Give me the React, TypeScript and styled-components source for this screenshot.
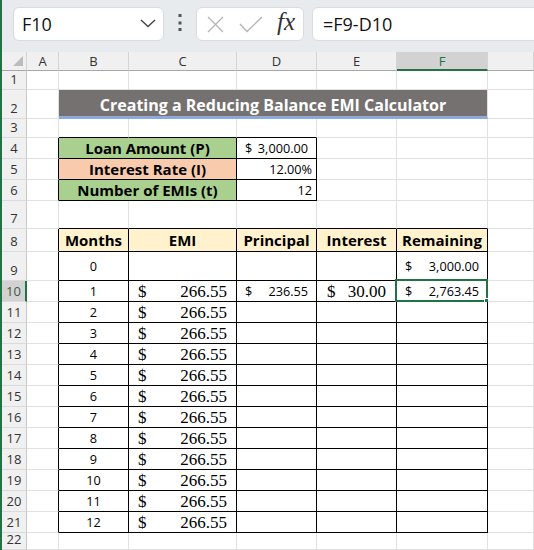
import React from "react";
import styled, { createGlobalStyle } from "styled-components";

const GREEN = "#a9d08e";
const SALMON = "#f8cbad";
const CREAM = "#fff2cc";
const GRID = "#e1e1e1";
const INK = "#000";
const EXCEL_GREEN = "#217346";

type Cell = {
    span?: number;
    text?: string;
    amount?: string;
    kind?: "label" | "head" | "num" | "big" | "title";
    bg?: string;
    align?: "flex-start" | "center" | "flex-end";
    pad?: number;
    selected?: boolean;
};

// rows 1..22, columns A=0 .. G=6
const ROW_HEIGHTS = [19, 29, 19, 21, 21, 21, 28, 23, 29, 21, 21, 21, 21, 21, 21, 21, 21, 21, 21, 21, 21, 17];

const TABLES = [
    { r1: 4, r2: 6, c1: 1, c2: 3 },
    { r1: 8, r2: 21, c1: 1, c2: 5 },
];

const inTable = (r: number, c: number) =>
    TABLES.some((t) => r >= t.r1 && r <= t.r2 && c >= t.c1 && c <= t.c2);

const sheet: Record<number, Record<number, Cell>> = {
    2: { 1: { span: 5, text: "Creating a Reducing Balance EMI Calculator", kind: "title", bg: "#767171" } },
    4: {
        1: { span: 2, text: "Loan Amount (P)", kind: "label", bg: GREEN },
        3: { amount: "3,000.00", kind: "num", pad: 8 },
    },
    5: {
        1: { span: 2, text: "Interest Rate (I)", kind: "label", bg: SALMON },
        3: { text: "12.00%", kind: "num", align: "flex-end", pad: 4 },
    },
    6: {
        1: { span: 2, text: "Number of EMIs (t)", kind: "label", bg: GREEN },
        3: { text: "12", kind: "num", align: "flex-end", pad: 4 },
    },
    8: {
        1: { text: "Months", kind: "head", bg: CREAM },
        2: { text: "EMI", kind: "head", bg: CREAM },
        3: { text: "Principal", kind: "head", bg: CREAM },
        4: { text: "Interest", kind: "head", bg: CREAM },
        5: { text: "Remaining", kind: "head", bg: CREAM },
    },
    9: {
        1: { text: "0", kind: "num" },
        5: { amount: "3,000.00", kind: "num", pad: 8 },
    },
    10: {
        1: { text: "1", kind: "num" },
        2: { amount: "266.55", kind: "big", pad: 9 },
        3: { amount: "236.55", kind: "num", pad: 8 },
        4: { amount: "30.00", kind: "big", pad: 10 },
        5: { amount: "2,763.45", kind: "num", pad: 8, selected: true },
    },
};

for (let m = 2; m <= 12; m++) {
    sheet[m + 9] = {
        1: { text: String(m), kind: "num" },
        2: { amount: "266.55", kind: "big", pad: 9 },
    };
}

const CellText = ({ cell }: { cell: Cell }) => {
    const Text =
        cell.kind === "title" ? TitleText :
        cell.kind === "label" || cell.kind === "head" ? BoldText :
        cell.kind === "big" ? BigText : PlainText;

    if (cell.amount) {
        return (
            <Acct>
                <Text>$</Text>
                <Text>{cell.amount}</Text>
            </Acct>
        );
    }
    return <Text>{cell.text}</Text>;
};

const App = () => {
    const rows = ROW_HEIGHTS.map((_, i) => i + 1);

    return (
        <Page>
            <GlobalStyle />
            <FormulaBar>
                <NameBox>
                    <span>F10</span>
                    <svg width="16" height="9" viewBox="0 0 16 9">
                        <polyline points="1,1 8,7.5 15,1" fill="none" stroke="#444" strokeWidth="1.4" />
                    </svg>
                </NameBox>
                <Dots>
                    <svg width="4" height="18" viewBox="0 0 4 18">
                        <rect x="0.5" y="0" width="3" height="3" fill="#555" />
                        <rect x="0.5" y="7.5" width="3" height="3" fill="#555" />
                        <rect x="0.5" y="14" width="3" height="3" fill="#555" />
                    </svg>
                </Dots>
                <FxBox>
                    <svg width="17" height="17" viewBox="0 0 17 17">
                        <path d="M1 1 L16 16 M16 1 L1 16" stroke="#b5b5b5" strokeWidth="1.3" />
                    </svg>
                    <svg width="24" height="17" viewBox="0 0 24 17">
                        <polyline points="1,8 8,15.5 23,1" fill="none" stroke="#b5b5b5" strokeWidth="1.3" />
                    </svg>
                    <Fx>fx</Fx>
                </FxBox>
                <FormulaInput>=F9-D10</FormulaInput>
            </FormulaBar>

            <Sheet $rows={ROW_HEIGHTS}>
                <Corner>
                    <svg width="10" height="10" viewBox="0 0 10 10">
                        <polygon points="10,0 10,10 0,10" fill="#bcbcbc" />
                    </svg>
                </Corner>
                {["A", "B", "C", "D", "E", "F", ""].map((l, i) => (
                    <ColHeader key={i} $selected={l === "F"}>{l}</ColHeader>
                ))}

                {rows.map((r) => {
                    const cells: React.ReactNode[] = [
                        <RowHeader key={`h${r}`} $selected={r === 10}>{r}</RowHeader>,
                    ];
                    for (let c = 0; c < 7; ) {
                        const cell = sheet[r]?.[c] ?? {};
                        const span = cell.span ?? 1;
                        const last = c + span - 1;
                        const right = inTable(r, last) || inTable(r, last + 1) ? INK : GRID;
                        const bottom = inTable(r, c) || inTable(r + 1, c) ? INK : GRID;
                        cells.push(
                            <SheetCell
                                key={`${r}-${c}`}
                                $span={span}
                                $bg={cell.bg}
                                $right={right}
                                $bottom={cell.kind === "title" ? "#8eaadb" : bottom}
                                $bottomWidth={cell.kind === "title" ? 3 : 1}
                                $align={cell.align ?? "center"}
                                $pad={cell.pad ?? 0}
                            >
                                {(cell.text || cell.amount) && <CellText cell={cell} />}
                                {cell.selected && (
                                    <Selection>
                                        <Handle />
                                    </Selection>
                                )}
                            </SheetCell>
                        );
                        c += span;
                    }
                    return cells;
                })}
            </Sheet>
        </Page>
    );
};

export default App;

const GlobalStyle = createGlobalStyle`
    html, body {
        margin: 0;
        padding: 0;
        background: #fff;
    }
    body {
        font-family: "Open Sans", "Liberation Sans", sans-serif;
    }
    * {
        box-sizing: border-box;
    }
`;

const Page = styled.div`
    width: 534px;
    height: 550px;
    overflow: hidden;
    border-left: 2px solid ${EXCEL_GREEN};
    background: #fff;
`;

const FormulaBar = styled.div`
    height: 52px;
    display: flex;
    align-items: flex-start;
    padding: 7px 0 0 11px;
    background: #e8ebee;
    overflow: hidden;
`;

const Box = styled.div`
    height: 34px;
    background: #fff;
    border: 1px solid #d9dbde;
    border-radius: 6px;
    display: flex;
    align-items: center;
`;

const NameBox = styled(Box)`
    width: 151px;
    padding: 0 7px 1px 8px;
    justify-content: space-between;
    font-size: 18px;
    color: #111;
`;

const Dots = styled.div`
    width: 32px;
    height: 34px;
    display: flex;
    align-items: center;
    justify-content: center;
    padding-bottom: 2px;
`;

const FxBox = styled(Box)`
    width: 108px;
    padding: 0 0 0 10px;
    gap: 15px;
`;

const Fx = styled.span`
    font-family: "Liberation Serif", "DejaVu Serif", serif;
    font-style: italic;
    font-size: 25px;
    color: #333;
    margin-left: -1px;
    padding-bottom: 4px;
`;

const FormulaInput = styled(Box)`
    flex: 1;
    margin-left: 8px;
    margin-right: -12px;
    padding: 0 0 1px 10px;
    font-size: 18px;
    color: #111;
`;

const Sheet = styled.div<{ $rows: number[] }>`
    display: grid;
    grid-template-columns: 25px 32px 70px 108px 80px 80px 91px 1fr;
    grid-template-rows: 19px ${({ $rows }) => $rows.map((h) => `${h}px`).join(" ")};
`;

const HeaderBase = styled.div`
    display: flex;
    align-items: center;
    justify-content: center;
    font-size: 13px;
    color: #333;
    background: #f0f0f0;
`;

const Corner = styled(HeaderBase)`
    justify-content: flex-end;
    align-items: flex-end;
    padding: 0 3px 4px 0;
    border-right: 1px solid #d4d4d4;
    border-bottom: 1px solid #a8a8a8;
`;

const ColHeader = styled(HeaderBase)<{ $selected: boolean }>`
    background: ${({ $selected }) => ($selected ? "#d2d2d2" : "#f0f0f0")};
    color: ${({ $selected }) => ($selected ? EXCEL_GREEN : "#333")};
    border-right: 1px solid #d4d4d4;
    border-bottom: ${({ $selected }) => ($selected ? `2px solid ${EXCEL_GREEN}` : "1px solid #a8a8a8")};
    padding-top: ${({ $selected }) => ($selected ? "1px" : "0")};
`;

const RowHeader = styled(HeaderBase)<{ $selected: boolean }>`
    align-items: flex-end;
    padding-bottom: 1px;
    background: ${({ $selected }) => ($selected ? "#d2d2d2" : "#f0f0f0")};
    color: ${({ $selected }) => ($selected ? "#3c5a48" : "#333")};
    border-right: ${({ $selected }) => ($selected ? `2px solid ${EXCEL_GREEN}` : "1px solid #c8c8c8")};
    border-bottom: 1px solid #dadada;
`;

const SheetCell = styled.div<{
    $span: number;
    $bg?: string;
    $right: string;
    $bottom: string;
    $bottomWidth: number;
    $align: string;
    $pad: number;
}>`
    grid-column: span ${({ $span }) => $span};
    position: relative;
    display: flex;
    align-items: center;
    justify-content: ${({ $align }) => $align};
    padding: 0 ${({ $pad }) => $pad}px;
    min-width: 0;
    white-space: nowrap;
    background: ${({ $bg }) => $bg ?? "#fff"};
    border-right: 1px solid ${({ $right }) => $right};
    border-bottom: ${({ $bottomWidth }) => $bottomWidth}px solid ${({ $bottom }) => $bottom};
    color: #000;
`;

const Acct = styled.div`
    width: 100%;
    display: flex;
    justify-content: space-between;
    align-items: center;
`;

const PlainText = styled.span`
    font-size: 12.7px;
    line-height: 1;
`;

const BigText = styled.span`
    font-family: "Liberation Serif", "Times New Roman", serif;
    font-size: 17px;
    line-height: 1;
`;

const BoldText = styled.span`
    font-size: 15px;
    font-weight: 700;
    line-height: 1;
`;

const TitleText = styled.span`
    font-size: 16px;
    font-weight: 700;
    color: #fff;
    line-height: 1;
    padding-top: 4px;
`;

const Selection = styled.div`
    position: absolute;
    top: -2px;
    left: -2px;
    right: -1px;
    bottom: -1px;
    border: 2px solid ${EXCEL_GREEN};
    pointer-events: none;
`;

const Handle = styled.div`
    position: absolute;
    right: -5px;
    bottom: -5px;
    width: 7px;
    height: 7px;
    background: ${EXCEL_GREEN};
    border: 1px solid #fff;
`;
